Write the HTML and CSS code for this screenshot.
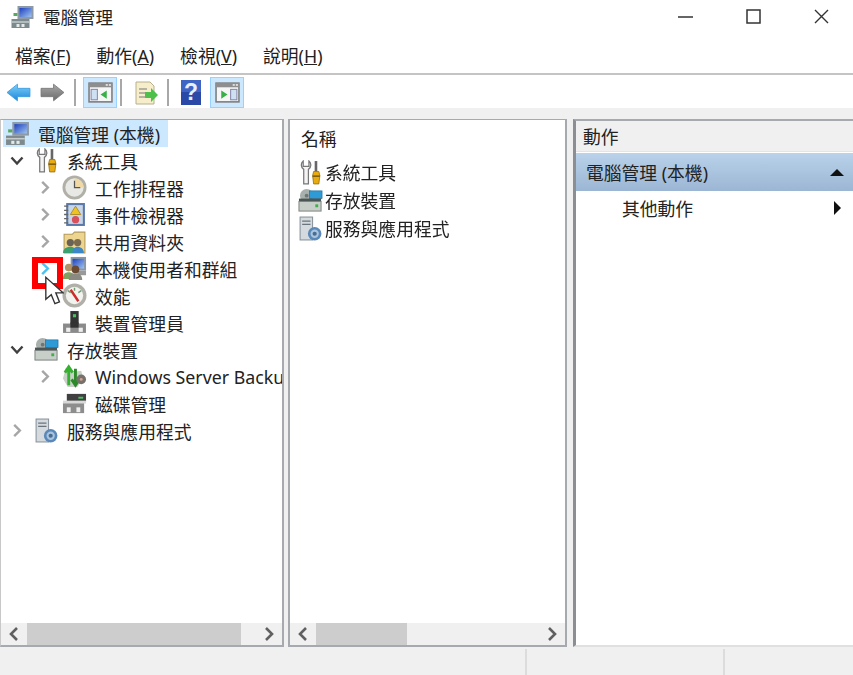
FILE: index.html
```html
<!DOCTYPE html>
<html lang="zh-Hant">
<head>
    <meta charset="UTF-8">
    <title>電腦管理</title>
    <link rel="stylesheet" href="styles.css">
</head>
<body>
    <svg class="defs" width="0" height="0">
        <defs>
            <linearGradient id="screenBlue" x1="0" y1="0" x2="1" y2="1">
                <stop offset="0" stop-color="#1c3fc0"/>
                <stop offset="1" stop-color="#9fc4ee"/>
            </linearGradient>
            <linearGradient id="arrowBlue" x1="0" y1="0" x2="0" y2="1">
                <stop offset="0" stop-color="#7fd0fa"/>
                <stop offset="1" stop-color="#1a86d8"/>
            </linearGradient>
            <linearGradient id="arrowGrey" x1="0" y1="0" x2="0" y2="1">
                <stop offset="0" stop-color="#a8a8a8"/>
                <stop offset="1" stop-color="#6a6a6a"/>
            </linearGradient>
            <symbol id="i-computer" viewBox="0 0 24 24">
                <rect x="7" y="1" width="16" height="13" fill="#8d99a6"/>
                <rect x="9" y="3" width="12" height="9" fill="url(#screenBlue)"/>
                <path d="M1 14h18v9H1z" fill="#7d8a8d"/>
                <path d="M1 17h18" stroke="#c6cccc" stroke-width="1.5"/>
                <rect x="6" y="19" width="3" height="3" fill="#e4e8e8"/>
                <rect x="11" y="19" width="3" height="3" fill="#e4e8e8"/>
                <rect x="3" y="8" width="4" height="3" fill="#5aa860"/>
            </symbol>
            <symbol id="i-tools" viewBox="0 0 24 24">
                <path d="M5 1C2.500 3 2.500 7 5.500 9V23h4.500V9C13 7 13 3 10.500 1V6H5z" fill="#f4f4f4" stroke="#777" stroke-width="1.200"/>
                <rect x="16" y="1" width="2.500" height="10" fill="#666"/>
                <path d="M15 11h5l1 4-1 8h-5l-1-8z" fill="#e8ab12" stroke="#8a6508" stroke-width=".7"/>
                <path d="M14 15.500h7" stroke="#6d5208" stroke-width="1.300"/>
            </symbol>
            <symbol id="i-clock" viewBox="0 0 26 26">
                <circle cx="13" cy="13" r="12.500" fill="#b0b0a8"/>
                <circle cx="13" cy="13" r="9.500" fill="#e8e8e4"/>
                <path d="M13 3.500a9.500 9.500 0 0 1 9.500 9.500H13z" fill="#f0d9a4"/>
                <path d="M13 6v7h6" fill="none" stroke="#555" stroke-width="1.300"/>
            </symbol>
            <symbol id="i-log" viewBox="0 0 24 24">
                <rect x="4" y="1" width="18" height="22" fill="#5a78a8"/>
                <rect x="6" y="3" width="14" height="18" fill="#c9d6e8"/>
                <path d="M2 4h4M2 8h4M2 12h4M2 16h4M2 20h4" stroke="#666" stroke-width="1.300"/>
                <path d="M13 4l5 8H8z" fill="#f0c420" stroke="#9a7a10" stroke-width=".7"/>
                <circle cx="13" cy="17" r="3.500" fill="#d8505a"/>
            </symbol>
            <symbol id="i-share" viewBox="0 0 24 24">
                <path d="M2 5h8l2 -2h10v20H2z" fill="#eed58f" stroke="#b39a55"/>
                <circle cx="8" cy="13" r="3.500" fill="#6a6355"/>
                <path d="M1 23c0-4 3-6 7-6s5 2 5 6z" fill="#3aa070"/>
                <circle cx="15" cy="13" r="3.500" fill="#7a6a50"/>
                <path d="M10 23c0-4 2-6 5-6s6 2 6 6z" fill="#3d86c8"/>
            </symbol>
            <symbol id="i-users" viewBox="0 0 26 24">
                <rect x="9" y="0" width="16" height="14" fill="#8a97a6"/>
                <rect x="11" y="2" width="12" height="10" fill="url(#screenBlue)"/>
                <path d="M16 14h9v5h-9z" fill="#999"/>
                <circle cx="7" cy="11" r="4" fill="#b09468"/>
                <path d="M1 23c0-5 2-7 6-7s6 2 6 7z" fill="#7fa060"/>
                <circle cx="14" cy="13" r="4" fill="#6a4a30"/>
                <path d="M7 24c0-5 3-7 7-7s7 2 7 7z" fill="#8a8a80"/>
            </symbol>
            <symbol id="i-perf" viewBox="0 0 26 26">
                <circle cx="13" cy="13" r="12.500" fill="#b0b0a8"/>
                <circle cx="13" cy="13" r="9" fill="#f2f2ee"/>
                <path d="M6 8l3 2M13 5v3M20 8l-3 2" stroke="#6aa070" stroke-width="1.500"/>
                <path d="M9 7l8 12" stroke="#d02a2a" stroke-width="2.500"/>
            </symbol>
            <symbol id="i-device" viewBox="0 0 24 24">
                <rect x="8" y="1" width="8" height="13" fill="#333"/>
                <rect x="10.500" y="4" width="3" height="3" fill="#4ac060"/>
                <path d="M1 13h22v9H1z" fill="#8a8a8a"/>
                <path d="M8 12h8v5H8z" fill="#333"/>
                <rect x="4" y="17" width="4" height="4" fill="#eee"/>
                <rect x="16" y="17" width="4" height="4" fill="#eee"/>
            </symbol>
            <symbol id="i-storage" viewBox="0 0 26 24">
                <circle cx="9" cy="7" r="7" fill="#a8b0ae"/>
                <circle cx="9" cy="7" r="2" fill="#6e7675"/>
                <rect x="12" y="2" width="13" height="8" fill="#2f9bd6" stroke="#1c6e9e" stroke-width=".7"/>
                <rect x="1" y="10" width="23" height="3" fill="#4c5554"/>
                <rect x="1" y="13" width="23" height="10" fill="#c8cec8" stroke="#7a8280"/>
                <rect x="18" y="16" width="3" height="3" fill="#3eb04c"/>
            </symbol>
            <symbol id="i-backup" viewBox="0 0 26 24">
                <path d="M4 3c6 4 9 4 16 3l2 8-6 9H6L1 14z" fill="#c8d0c8"/>
                <path d="M7 2v19M3 8l4-6 4 6" fill="none" stroke="#35b030" stroke-width="3"/>
                <path d="M14 4v16M10 15l4 6 4-6" fill="none" stroke="#2d8a28" stroke-width="3"/>
                <circle cx="20" cy="15" r="5" fill="#75726c"/>
                <circle cx="20" cy="15" r="1.500" fill="#d8a090"/>
            </symbol>
            <symbol id="i-disk" viewBox="0 0 26 24">
                <path d="M5 2h20v9H5z" fill="#404040"/>
                <rect x="17" y="5" width="5" height="2" fill="#4ac060"/>
                <rect x="1" y="11" width="22" height="11" fill="#8d8d8d"/>
                <rect x="1" y="9" width="24" height="3" fill="#d8d8d8"/>
                <rect x="5" y="16" width="4" height="5" fill="#eee"/>
                <rect x="15" y="16" width="4" height="5" fill="#eee"/>
            </symbol>
            <symbol id="i-services" viewBox="0 0 24 24">
                <rect x="2" y="1" width="12" height="22" fill="#d4dade" stroke="#88929a"/>
                <path d="M4 5h8M4 8h8" stroke="#6a747c" stroke-width="1.200"/>
                <circle cx="16" cy="17" r="6.500" fill="#5a88b8"/>
                <circle cx="16" cy="17" r="4" fill="#a8c4de"/>
                <circle cx="16" cy="17" r="2" fill="#4a6c90"/>
            </symbol>
            <symbol id="i-chev-right" viewBox="0 0 12 16">
                <path d="M3 2L9 8l-6 6" fill="none" stroke="currentColor" stroke-width="2.600"/>
            </symbol>
            <symbol id="i-chev-down" viewBox="0 0 16 12">
                <path d="M2.500 3L8 9l5.500-6" fill="none" stroke="currentColor" stroke-width="2.400"/>
            </symbol>
            <symbol id="i-pane" viewBox="0 0 24 20">
                <rect x="1" y="1" width="22" height="18" fill="#f6f6f6" stroke="#7c7c7c" stroke-width="1.500"/>
                <rect x="1" y="1" width="22" height="4" fill="#8e8e8e"/>
                <rect x="17" y="2" width="2" height="1.500" fill="#eee"/>
                <rect x="20" y="2" width="2" height="1.500" fill="#eee"/>
            </symbol>
        </defs>
    </svg>

    <header class="titlebar">
        <svg class="title-icon"><use href="#i-computer"/></svg>
        <h1>電腦管理</h1>
        <div class="window-controls">
            <svg class="win-btn" viewBox="0 0 15 15"><path d="M0 8h15" stroke="#333" stroke-width="1.500"/></svg>
            <svg class="win-btn" viewBox="0 0 15 15"><rect x="1" y="1" width="13" height="13" fill="none" stroke="#333" stroke-width="1.500"/></svg>
            <svg class="win-btn" viewBox="0 0 15 15"><path d="M1 1l13 13M14 1L1 14" stroke="#333" stroke-width="1.400"/></svg>
        </div>
    </header>

    <nav class="menubar">
        <span>檔案(<u>F</u>)</span>
        <span>動作(<u>A</u>)</span>
        <span>檢視(<u>V</u>)</span>
        <span>說明(<u>H</u>)</span>
    </nav>

    <div class="toolbar">
        <svg class="tool-arrow" viewBox="0 0 24 18"><path d="M1 9l10-8v4h12v8H11v4z" fill="url(#arrowBlue)" stroke="#3a9ade" stroke-width=".8"/></svg>
        <svg class="tool-arrow forward" viewBox="0 0 24 18"><path d="M23 9L13 1v4H1v8h12v4z" fill="url(#arrowGrey)" stroke="#777" stroke-width=".8"/></svg>
        <span class="tool-sep first"></span>
        <button class="tool-btn active">
            <svg class="pane-icon" viewBox="0 0 24 20">
                <use href="#i-pane"/>
                <rect x="3" y="7" width="6" height="10" fill="#cfe0f2" stroke="#88a"/>
                <path d="M18 8v8l-6-4z" fill="#38b048"/>
            </svg>
        </button>
        <span class="tool-sep"></span>
        <svg class="export-icon" viewBox="0 0 24 24">
            <path d="M2 1h14l4 4v18H2z" fill="#f6eecb" stroke="#b8ae8c"/>
            <path d="M5 8h8M5 12h6M5 16h6" stroke="#777" stroke-width="1.200"/>
            <path d="M11 11h6V7l7 7-7 7v-4h-6z" fill="#4cc04a"/>
        </svg>
        <span class="tool-sep"></span>
        <svg class="help-icon" viewBox="0 0 20 25">
            <rect width="20" height="25" fill="#2b4aa8"/>
            <rect x="0" y="0" width="20" height="12" fill="#3f64c4"/>
            <text x="10" y="20" text-anchor="middle" class="help-mark">?</text>
        </svg>
        <button class="tool-btn active last">
            <svg class="pane-icon" viewBox="0 0 24 20">
                <use href="#i-pane"/>
                <rect x="15" y="7" width="6" height="10" fill="#cfe0f2" stroke="#88a"/>
                <path d="M6 8v8l6-4z" fill="#38b048"/>
            </svg>
        </button>
    </div>

    <main class="panes">
        <section class="pane">
            <ul class="tree">
                <li class="row root"><svg class="icon"><use href="#i-computer"/></svg><span class="label">電腦管理 (本機)</span></li>
                <li class="row lvl-1"><svg class="twisty open"><use href="#i-chev-down"/></svg><svg class="icon"><use href="#i-tools"/></svg><span class="label">系統工具</span></li>
                <li class="row lvl-2"><svg class="twisty"><use href="#i-chev-right"/></svg><svg class="icon"><use href="#i-clock"/></svg><span class="label">工作排程器</span></li>
                <li class="row lvl-2"><svg class="twisty"><use href="#i-chev-right"/></svg><svg class="icon"><use href="#i-log"/></svg><span class="label">事件檢視器</span></li>
                <li class="row lvl-2"><svg class="twisty"><use href="#i-chev-right"/></svg><svg class="icon"><use href="#i-share"/></svg><span class="label">共用資料夾</span></li>
                <li class="row lvl-2"><svg class="twisty hover"><use href="#i-chev-right"/></svg><svg class="icon"><use href="#i-users"/></svg><span class="label">本機使用者和群組</span></li>
                <li class="row lvl-2"><span class="twisty"></span><svg class="icon"><use href="#i-perf"/></svg><span class="label">效能</span></li>
                <li class="row lvl-2"><span class="twisty"></span><svg class="icon"><use href="#i-device"/></svg><span class="label">裝置管理員</span></li>
                <li class="row lvl-1"><svg class="twisty open"><use href="#i-chev-down"/></svg><svg class="icon"><use href="#i-storage"/></svg><span class="label">存放裝置</span></li>
                <li class="row lvl-2"><svg class="twisty"><use href="#i-chev-right"/></svg><svg class="icon"><use href="#i-backup"/></svg><span class="label">Windows Server Backup</span></li>
                <li class="row lvl-2"><span class="twisty"></span><svg class="icon"><use href="#i-disk"/></svg><span class="label">磁碟管理</span></li>
                <li class="row lvl-1"><svg class="twisty"><use href="#i-chev-right"/></svg><svg class="icon"><use href="#i-services"/></svg><span class="label">服務與應用程式</span></li>
            </ul>
            <div class="hscroll">
                <svg class="scroll-arrow"><use href="#i-chev-right" class="flip"/></svg>
                <div class="scroll-track"><div class="scroll-thumb wide"></div></div>
                <svg class="scroll-arrow"><use href="#i-chev-right"/></svg>
            </div>
        </section>

        <section class="pane">
            <div class="list">
                <div class="list-head">名稱</div>
                <div class="list-row"><svg class="icon"><use href="#i-tools"/></svg><span>系統工具</span></div>
                <div class="list-row"><svg class="icon"><use href="#i-storage"/></svg><span>存放裝置</span></div>
                <div class="list-row"><svg class="icon"><use href="#i-services"/></svg><span>服務與應用程式</span></div>
            </div>
            <div class="hscroll">
                <svg class="scroll-arrow"><use href="#i-chev-right" class="flip"/></svg>
                <div class="scroll-track"><div class="scroll-thumb narrow"></div></div>
                <svg class="scroll-arrow"><use href="#i-chev-right"/></svg>
            </div>
        </section>

        <section class="pane actions">
            <div class="actions-head">動作</div>
            <div class="actions-band"><span>電腦管理 (本機)</span><span class="tri-up"></span></div>
            <div class="actions-row"><span>其他動作</span><span class="tri-right"></span></div>
        </section>
    </main>

    <footer class="statusbar">
        <div class="status-cell main"></div>
        <div class="status-cell mid"></div>
        <div class="status-cell"></div>
    </footer>

    <div class="red-box"></div>
    <svg class="cursor" viewBox="0 0 22 32">
        <path d="M2 1v24l6-5 4 10 5-2-4-10h8z" fill="#fff" stroke="#333" stroke-width="1.500"/>
    </svg>
</body>
</html>
```

FILE: styles.css
```css
* {
    box-sizing: border-box;
}
html, body {
    height: 100%;
}
body {
    margin: 0;
    width: 853px;
    height: 675px;
    overflow: hidden;
    position: relative;
    display: flex;
    flex-direction: column;
    background-color: #f0f0f0;
    color: #222;
    font-family: "Noto Sans", "Noto Sans CJK TC", sans-serif;
    font-size: 17.800px;
    filter: blur(0.35px);
}
.defs {
    position: absolute;
}
.titlebar {
    height: 36px;
    flex: none;
    display: flex;
    align-items: center;
    padding: 0 24px 3px 10px;
    background-color: white;
}
.title-icon {
    width: 25px;
    height: 24px;
}
.titlebar h1 {
    margin: 0 0 0 8px;
    font-size: 17.500px;
    font-weight: normal;
}
.window-controls {
    margin-left: auto;
    display: flex;
    gap: 53px;
}
.win-btn {
    width: 15px;
    height: 15px;
}
.menubar {
    height: 39px;
    flex: none;
    display: flex;
    gap: 26px;
    align-items: center;
    padding: 1px 0 0 15px;
    background-color: white;
    border-bottom: 2px solid #c4c4c4;
    font-size: 17.800px;
}
.toolbar {
    height: 33px;
    flex: none;
    display: flex;
    align-items: center;
    padding: 2px 0 0 6px;
    background-color: white;
}
.tool-arrow {
    width: 25px;
    height: 19px;
}
.tool-arrow.forward {
    margin-left: 9px;
}
.tool-sep {
    width: 2px;
    height: 27px;
    margin-right: 12px;
    background-color: #a8a8a8;
}
.tool-sep.first {
    margin: 0 7px 0 9px;
}
.tool-btn {
    width: 34px;
    height: 31px;
    padding: 0;
    margin-right: 3px;
    display: flex;
    align-items: center;
    justify-content: center;
    background-color: #cce8ff;
    border: 1px solid #99d1ff;
}
.tool-btn.last {
    margin: 0 0 0 9px;
}
.pane-icon {
    width: 25px;
    height: 21px;
}
.export-icon {
    width: 24px;
    height: 24px;
    margin-right: 9px;
}
.help-icon {
    width: 20px;
    height: 25px;
}
.help-mark {
    fill: #e8eefa;
    font-family: "Liberation Sans", sans-serif;
    font-weight: bold;
    font-size: 23px;
}
.panes {
    flex: none;
    height: 539px;
    padding-top: 11px;
    display: grid;
    grid-template-columns: 284px 279px 282px;
    column-gap: 4px;
}
.panes .pane:last-child {
    margin-left: 2px;
}
.pane {
    display: flex;
    flex-direction: column;
    min-width: 0;
    background-color: white;
    border: 2px solid #a6a9ad;
    border-top-width: 1px;
}
.pane:first-child {
    border-left-width: 1px;
    border-left-color: #c8c8c8;
}
.tree {
    flex: 1;
    list-style: none;
    margin: 0;
    padding: 0;
    overflow: hidden;
}
.row {
    height: 27px;
    display: flex;
    align-items: center;
    white-space: nowrap;
}
.row.root {
    padding-left: 4px;
    background: linear-gradient(90deg, transparent 2px, #cce8ff 2px, #cce8ff 167px, transparent 167px);
}
.row.lvl-1 {
    padding-left: 8px;
}
.row.lvl-2 {
    padding-left: 36px;
}
.twisty {
    width: 16px;
    height: 15px;
    flex: none;
    margin-right: 9px;
    color: #a6a6a6;
}
.twisty.open {
    color: #404040;
}
.twisty.hover {
    color: #4cc2f1;
}
.icon {
    width: 25px;
    height: 25px;
    flex: none;
}
.label {
    margin-left: 8px;
}
.hscroll {
    height: 22px;
    flex: none;
    display: flex;
    align-items: center;
    background-color: #f0f0f0;
    color: #606060;
}
.scroll-arrow {
    width: 26px;
    height: 16px;
    flex: none;
}
.scroll-arrow use.flip {
    transform: scaleX(-1);
    transform-origin: 13px 8px;
}
.scroll-track {
    flex: 1;
    height: 100%;
}
.scroll-thumb {
    height: 100%;
    background-color: #cdcdcd;
}
.scroll-thumb.wide {
    width: 214px;
}
.scroll-thumb.narrow {
    width: 91px;
}
.list {
    flex: 1;
    padding: 5px 0 0 8px;
}
.list-head {
    height: 33px;
    line-height: 28px;
    padding-left: 3px;
}
.list-row {
    height: 28px;
    display: flex;
    align-items: center;
}
.list-row span {
    margin-left: 2px;
}
.actions {
    border-left: 3px solid #8b8e92;
    border-right: none;
    border-top-width: 2px;
    border-bottom: 2px solid #e0e0e0;
}
.actions-head {
    height: 31px;
    padding-left: 7px;
    line-height: 32px;
    background-color: #f0f0f0;
    border-bottom: 1px solid #e4e4e4;
}
.actions-band {
    height: 38px;
    margin-top: 1px;
    display: flex;
    align-items: center;
    justify-content: space-between;
    padding: 0 9px 0 10px;
    background: linear-gradient(#bad2ea, #9bb6d4);
}
.tri-up {
    width: 0;
    height: 0;
    border-left: 7px solid transparent;
    border-right: 7px solid transparent;
    border-bottom: 7px solid #111;
}
.actions-row {
    height: 33px;
    display: flex;
    align-items: center;
    justify-content: space-between;
    padding: 0 12px 0 46px;
}
.tri-right {
    width: 0;
    height: 0;
    border-top: 7px solid transparent;
    border-bottom: 7px solid transparent;
    border-left: 7px solid #111;
}
.statusbar {
    flex: 1;
    display: flex;
    padding-top: 2px;
}
.status-cell {
    flex: 1;
}
.status-cell.main {
    flex: none;
    width: 525px;
}
.status-cell.mid {
    flex: none;
    width: 200px;
    border-left: 2px solid #dcdcdc;
    border-right: 2px solid #dcdcdc;
}
.red-box {
    position: absolute;
    left: 32px;
    top: 257px;
    width: 31px;
    height: 32px;
    border: 6px solid #fe0000;
}
.cursor {
    position: absolute;
    left: 44px;
    top: 276px;
    width: 20px;
    height: 30px;
}
```
